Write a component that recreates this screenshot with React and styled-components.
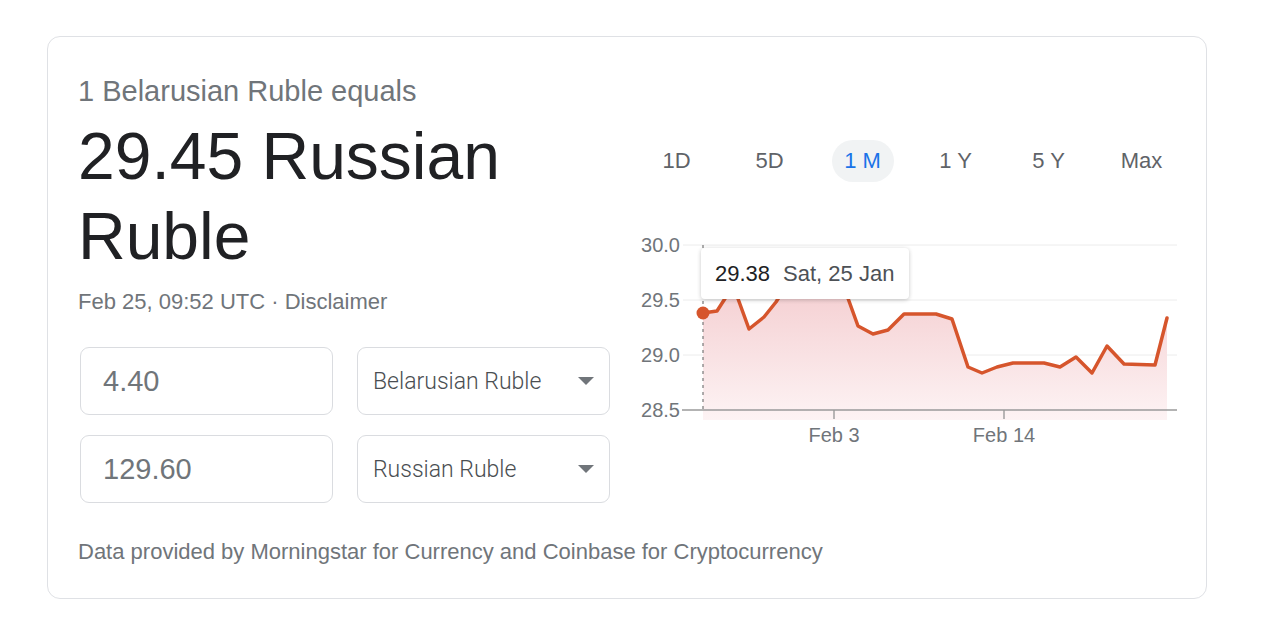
import styled, {createGlobalStyle} from 'styled-components'

const GlobalStyle = createGlobalStyle`
	body {
		margin: 0;
		background: #fff;
		font-family: Arial, "Liberation Sans", sans-serif;
	}
`

const ranges = ['1D', '5D', '1 M', '1 Y', '5 Y', 'Max']

// chart data, already in svg coordinates
const points = [
	[73, 83], [87, 81], [96, 67], [103, 55], [119, 99], [134, 87], [146, 72],
	[160, 50], [180, 55], [200, 48], [215, 60], [228, 96], [243, 104], [258, 100],
	[274, 84], [306, 84], [322, 89], [338, 137], [352, 143], [367, 137], [383, 133],
	[414, 133], [430, 137], [446, 127], [462, 143], [477, 116], [494, 134],
	[525, 135], [537, 88],
]

const linePath = points.map((p, i) => (i ? 'L' : 'M') + p[0] + ' ' + p[1]).join(' ')
const areaPath = linePath + ' L537 190 L73 190 Z'

const yTicks = [
	{label: '30.0', y: 15},
	{label: '29.5', y: 70},
	{label: '29.0', y: 125},
	{label: '28.5', y: 180},
]

const xTicks = [
	{label: 'Feb 3', x: 204},
	{label: 'Feb 14', x: 374},
]

const Chart = () => (
	<ChartWrap>
		<svg width="560" height="225" viewBox="0 0 560 225">
			<defs>
				<linearGradient id="fill" x1="0" y1="15" x2="0" y2="190" gradientUnits="userSpaceOnUse">
					<stop offset="0" stopColor="#f2c4c7" />
					<stop offset="1" stopColor="#fdf3f4" />
				</linearGradient>
			</defs>
			{yTicks.slice(0, 3).map(t => (
				<line key={t.label} x1="53" x2="547" y1={t.y} y2={t.y} stroke="#ececec" strokeWidth="1" />
			))}
			<path d={areaPath} fill="url(#fill)" />
			<line x1="52" x2="547" y1="180" y2="180" stroke="#9a9a9a" strokeWidth="1.4" />
			{xTicks.map(t => (
				<g key={t.label}>
					<line x1={t.x} x2={t.x} y1="180" y2="189" stroke="#9a9a9a" strokeWidth="1.4" />
					<text x={t.x} y="212" textAnchor="middle" fontSize="20" fill="#70757a">{t.label}</text>
				</g>
			))}
			{yTicks.map(t => (
				<text key={t.label} x="50" y={t.y + 7} textAnchor="end" fontSize="20" fill="#70757a">{t.label}</text>
			))}
			<line x1="73" x2="73" y1="15" y2="180" stroke="#777" strokeWidth="1.2" strokeDasharray="3 4" />
			<path d={linePath} fill="none" stroke="#d6552c" strokeWidth="3.5" strokeLinejoin="round" strokeLinecap="round" />
			<circle cx="73" cy="83" r="6.5" fill="#d6552c" />
		</svg>
		<Tooltip>
			<TipValue>29.38</TipValue>
			<TipDate>Sat, 25 Jan</TipDate>
		</Tooltip>
	</ChartWrap>
)

const App = () => {
	return (
		<Page>
			<GlobalStyle />
			<Card>
				<Top>
					<Left>
						<Equals>1 Belarusian Ruble equals</Equals>
						<Amount>29.45 Russian Ruble</Amount>
						<Stamp>Feb 25, 09:52 UTC · Disclaimer</Stamp>
						<Converter>
							<Field>4.40</Field>
							<Select>
								<span>Belarusian Ruble</span>
								<Arrow />
							</Select>
							<Field>129.60</Field>
							<Select>
								<span>Russian Ruble</span>
								<Arrow />
							</Select>
						</Converter>
					</Left>
					<Right>
						<Tabs>
							{ranges.map(r => (
								<Tab key={r} $active={r === '1 M'}>{r}</Tab>
							))}
						</Tabs>
						<Chart />
					</Right>
				</Top>
				<Footer>Data provided by Morningstar for Currency and Coinbase for Cryptocurrency</Footer>
			</Card>
		</Page>
	)
}

/*Style*/
const Page = styled.div`
	padding: 36px 0 0 47px;
`

const Card = styled.div`
	width: 1160px;
	box-sizing: border-box;
	border: 1px solid #dfe1e5;
	border-radius: 13px;
	padding: 36px 16px 32px 30px;
`

const Top = styled.div`
	display: flex;
	align-items: flex-start;
	gap: 20px;
`

const Left = styled.div`
	width: 532px;
`

const Equals = styled.div`
	font-size: 29px;
	line-height: 36px;
	color: #70757a;
`

const Amount = styled.div`
	margin-top: 7px;
	font-size: 66px;
	line-height: 80px;
	color: #202124;
`

const Stamp = styled.div`
	margin-top: 12px;
	font-size: 22px;
	line-height: 28px;
	color: #70757a;
`

const Converter = styled.div`
	margin: 31px 0 0 2px;
	display: grid;
	grid-template-columns: 253px 253px;
	column-gap: 24px;
	row-gap: 20px;
`

const Field = styled.div`
	height: 68px;
	box-sizing: border-box;
	border: 1px solid #dadce0;
	border-radius: 9px;
	padding-left: 22px;
	display: flex;
	align-items: center;
	font-size: 29px;
	color: #70757a;
`

const Select = styled.div`
	height: 68px;
	box-sizing: border-box;
	border: 1px solid #dadce0;
	border-radius: 9px;
	padding: 0 15px 0 15px;
	display: flex;
	align-items: center;
	justify-content: space-between;
	font-family: Roboto, "Liberation Sans", sans-serif;
	font-weight: 300;
	font-size: 23px;
	color: #4a4e52;
`

const Arrow = styled.div`
	width: 0;
	height: 0;
	border-left: 8.5px solid transparent;
	border-right: 8.5px solid transparent;
	border-top: 8px solid #70757a;
`

const Right = styled.div`
	width: 560px;
	padding-top: 67px;
`

const Tabs = styled.div`
	display: grid;
	grid-template-columns: repeat(6, 93px);
`

const Tab = styled.div`
	justify-self: center;
	height: 42px;
	width: 62px;
	border-radius: 21px;
	display: flex;
	align-items: center;
	justify-content: center;
	font-size: 22px;
	color: ${p => (p.$active ? '#1a73e8' : '#5f6368')};
	background: ${p => (p.$active ? '#f1f3f4' : 'transparent')};
`

const ChartWrap = styled.div`
	position: relative;
	margin-top: 48px;
	height: 225px;
`

const Tooltip = styled.div`
	position: absolute;
	left: 71px;
	top: 18px;
	width: 208px;
	height: 51px;
	box-sizing: border-box;
	padding-left: 14px;
	display: flex;
	align-items: center;
	gap: 13px;
	background: #fff;
	border-radius: 4px;
	box-shadow: 0 1px 4px rgba(0, 0, 0, 0.22);
	font-size: 22px;
`

const TipValue = styled.span`
	color: #202124;
`

const TipDate = styled.span`
	color: #4d5156;
`

const Footer = styled.div`
	margin-top: 35px;
	font-size: 22px;
	line-height: 28px;
	color: #70757a;
`

export default App
